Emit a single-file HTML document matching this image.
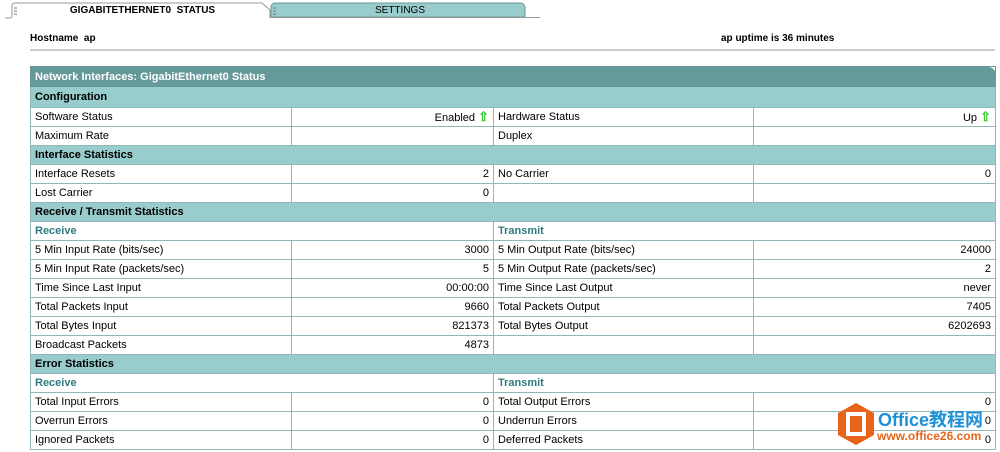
<!DOCTYPE html><html><head><style>
body{margin:0;width:1000px;height:452px;overflow:hidden;background:#fff;font-family:"Liberation Sans",Arial,sans-serif;font-size:11px;color:#000;position:relative}
.tab{position:absolute;top:3px;height:15px;text-align:center;font-size:10px;line-height:15px}
table{position:absolute;left:30px;top:66px;width:966px;border-collapse:collapse;table-layout:fixed}
td{height:18px;border:1px solid #8fb8b8;padding:0 4px;white-space:nowrap}
td.r{text-align:right}
tr.h td{background:#99cccc;font-weight:bold;border-color:#8fb8b8}
tr.s td{color:#2e7a80;font-weight:bold}
tr.t td{background:#669999;color:#fff;font-weight:bold;height:19px;border-color:#669999}
.up{color:#2ecc2e;font-weight:bold;font-size:13px}
</style></head><body>
<svg style="position:absolute;left:0;top:0" width="540" height="20">
<path d="M5 18 H10 Q12 18 12 15 V6 Q12 3 15 3 H262 L270 10 V18" fill="#fff" stroke="#999"/>
<path d="M271 17 V7 Q271 3 276 3 H520 Q524 3 525 7 V17 Z" fill="#99cccc" stroke="#6a9999"/>
<line x1="270" y1="17.5" x2="540" y2="17.5" stroke="#999"/>
<g stroke="#777"><line x1="14" y1="8" x2="17" y2="8"/><line x1="14" y1="11" x2="17" y2="11"/><line x1="14" y1="14" x2="17" y2="14"/><line x1="273" y1="8" x2="276" y2="8"/><line x1="273" y1="11" x2="276" y2="11"/><line x1="273" y1="14" x2="276" y2="14"/></g>
</svg>
<div class="tab" style="left:40px;width:205px;font-weight:bold">GIGABITETHERNET0&nbsp; STATUS</div>
<div class="tab" style="left:290px;width:220px">SETTINGS</div>
<div style="position:absolute;left:30px;top:33px;font-weight:bold;font-size:10px">Hostname&nbsp; ap</div>
<div style="position:absolute;left:721px;top:33px;font-weight:bold;font-size:10px">ap uptime is 36 minutes</div>
<div style="position:absolute;left:30px;top:49px;width:965px;height:2px;background:#ccc"></div>
<table>
<colgroup><col style="width:261px"><col style="width:202px"><col style="width:260px"><col></colgroup>
<tr class="t"><td colspan="4" style="border-radius:0 8px 0 0">Network Interfaces: GigabitEthernet0 Status</td></tr>
<tr class="h"><td colspan="4" style="height:20px">Configuration</td></tr>
<tr><td>Software Status</td><td class="r">Enabled <span class="up">⇧</span></td><td>Hardware Status</td><td class="r">Up <span class="up">⇧</span></td></tr>
<tr><td>Maximum Rate</td><td></td><td>Duplex</td><td></td></tr>
<tr class="h"><td colspan="4">Interface Statistics</td></tr>
<tr><td>Interface Resets</td><td class="r">2</td><td>No Carrier</td><td class="r">0</td></tr>
<tr><td>Lost Carrier</td><td class="r">0</td><td></td><td></td></tr>
<tr class="h"><td colspan="4">Receive / Transmit Statistics</td></tr>
<tr class="s"><td colspan="2">Receive</td><td colspan="2">Transmit</td></tr>
<tr><td>5 Min Input Rate (bits/sec)</td><td class="r">3000</td><td>5 Min Output Rate (bits/sec)</td><td class="r">24000</td></tr>
<tr><td>5 Min Input Rate (packets/sec)</td><td class="r">5</td><td>5 Min Output Rate (packets/sec)</td><td class="r">2</td></tr>
<tr><td>Time Since Last Input</td><td class="r">00:00:00</td><td>Time Since Last Output</td><td class="r">never</td></tr>
<tr><td>Total Packets Input</td><td class="r">9660</td><td>Total Packets Output</td><td class="r">7405</td></tr>
<tr><td>Total Bytes Input</td><td class="r">821373</td><td>Total Bytes Output</td><td class="r">6202693</td></tr>
<tr><td>Broadcast Packets</td><td class="r">4873</td><td></td><td></td></tr>
<tr class="h"><td colspan="4">Error Statistics</td></tr>
<tr class="s"><td colspan="2">Receive</td><td colspan="2">Transmit</td></tr>
<tr><td>Total Input Errors</td><td class="r">0</td><td>Total Output Errors</td><td class="r">0</td></tr>
<tr><td>Overrun Errors</td><td class="r">0</td><td>Underrun Errors</td><td class="r">0</td></tr>
<tr><td>Ignored Packets</td><td class="r">0</td><td>Deferred Packets</td><td class="r">0</td></tr>
</table>
<svg style="position:absolute;left:836px;top:402px" width="40" height="44"><polygon points="20,1 38,11 38,33 20,43 2,33 2,11" fill="#e8641b"/><rect x="12" y="12" width="16" height="20" fill="none" stroke="#fff" stroke-width="4"/></svg>
<div style="position:absolute;left:878px;top:406px;color:#1e90d8;font-weight:bold;font-size:18px;font-family:'Liberation Sans','Noto Sans CJK SC',sans-serif">Office教程网</div>
<div style="position:absolute;left:877px;top:429px;color:#e8641b;font-weight:bold;font-size:12px">www.office26.com</div>
</body></html>
